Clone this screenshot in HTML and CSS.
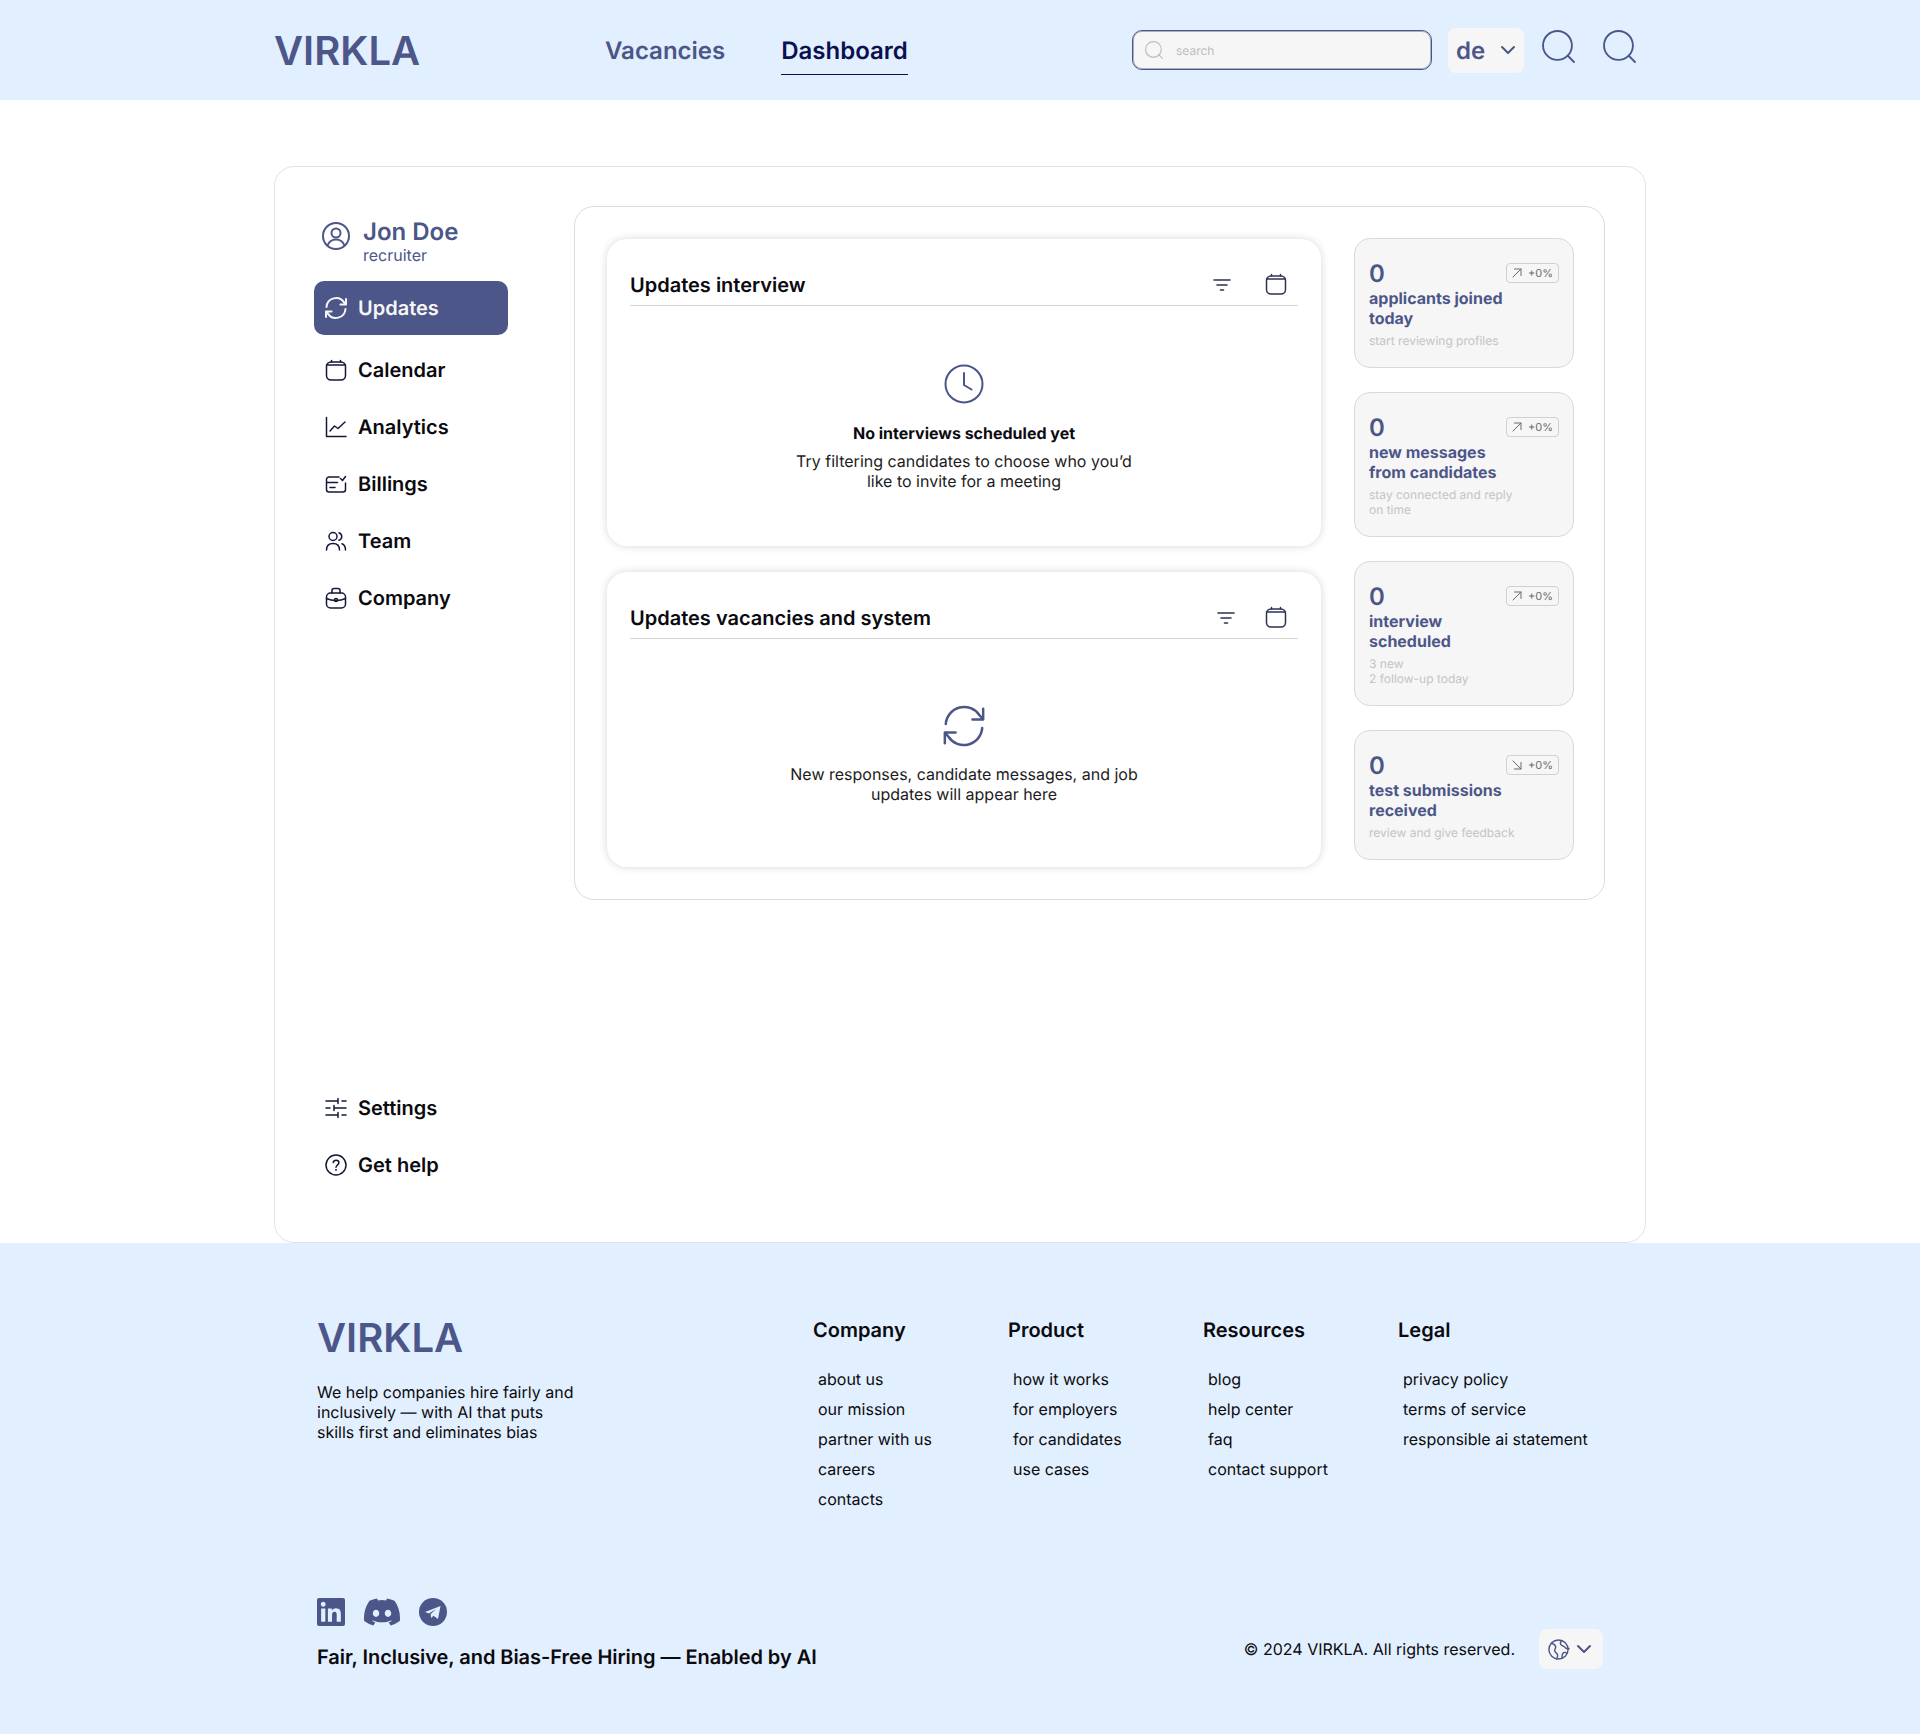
FILE: index.html
```html
<!DOCTYPE html>
<html lang="en">
<head>
    <meta charset="UTF-8">
    <meta name="viewport" content="width=device-width, initial-scale=1.0">
    <title>VIRKLA - Dashboard</title>
    <link rel="stylesheet" href="styles.css">
</head>
<body>
    <svg class="sprites" aria-hidden="true">
        <symbol id="i-search" viewBox="0 0 32 32"><circle cx="15" cy="15" r="14"/><path d="M25 25l6 6"/></symbol>
        <symbol id="i-chevron" viewBox="0 0 24 24"><path d="M6 9l6 6 6-6"/></symbol>
        <symbol id="i-sync" viewBox="0 0 24 24"><path d="M2.500 11a9.600 9.600 0 0 1 17.600-4.600L22 8.600M22 3v5.600h-5.600"/><path d="M21.500 13a9.600 9.600 0 0 1-17.600 4.600L2 15.400M2 21v-5.600h5.600"/></symbol>
        <symbol id="i-calendar" viewBox="0 0 24 24"><rect x="2.500" y="4" width="19" height="18" rx="4.500"/><path d="M2.500 7h19M7.500 2.500V4M16.500 2.500V4"/></symbol>
        <symbol id="i-filter" viewBox="0 0 18 14"><path d="M1 2h16M4 7h10M7.500 12h3"/></symbol>
        <symbol id="i-up" viewBox="0 0 12 12"><path d="M2 10l8-8M3.500 2H10v6.500"/></symbol>
        <symbol id="i-down" viewBox="0 0 12 12"><path d="M2 2l8 8M3.500 10H10V3.500"/></symbol>
    </svg>

    <header class="header">
        <div class="header-inner">
            <a class="logo header-logo">VIRKLA</a>
            <nav class="top-nav">
                <a class="top-link">Vacancies</a>
                <a class="top-link active">Dashboard</a>
            </nav>
            <div class="header-tools">
                <div class="search">
                    <svg class="search-icon"><use href="#i-search"/></svg>
                    <span>search</span>
                </div>
                <div class="lang">
                    <span>de</span>
                    <svg class="lang-chevron"><use href="#i-chevron"/></svg>
                </div>
                <svg class="tool-icon"><use href="#i-search"/></svg>
                <svg class="tool-icon"><use href="#i-search"/></svg>
            </div>
        </div>
    </header>

    <main class="main">
        <div class="board">
            <aside class="sidebar">
                <div class="side-top">
                    <div class="user">
                        <svg class="user-icon" viewBox="0 0 28 28"><circle cx="14" cy="14" r="13"/><circle cx="14" cy="11" r="4.500"/><path d="M5.500 23.500c1.500-4 4.500-6 8.500-6s7 2 8.500 6"/></svg>
                        <div>
                            <div class="user-name">Jon Doe</div>
                            <div class="user-role">recruiter</div>
                        </div>
                    </div>
                    <a class="side-item current"><svg class="side-icon"><use href="#i-sync"/></svg>Updates</a>
                    <a class="side-item"><svg class="side-icon"><use href="#i-calendar"/></svg>Calendar</a>
                    <a class="side-item">
                        <svg class="side-icon" viewBox="0 0 24 24"><path d="M2.500 2.500V21.500H22M6 16l4.500-5 3.500 2.500L21 7"/></svg>
                        Analytics
                    </a>
                    <a class="side-item">
                        <svg class="side-icon" viewBox="0 0 24 24"><path d="M15 5H5a2.500 2.500 0 0 0-2.500 2.500v10A2.500 2.500 0 0 0 5 20h14a2.500 2.500 0 0 0 2.500-2.500V11M2.500 10.500h11M6 15.500h5M16.500 6.500l2 2 3-4"/></svg>
                        Billings
                    </a>
                    <a class="side-item">
                        <svg class="side-icon" viewBox="0 0 24 24"><circle cx="9" cy="7.500" r="4"/><path d="M2.500 21c0-4.500 2.500-6.500 6.500-6.500s6.500 2 6.500 6.500M15 3.700a4 4 0 0 1 0 7.600M18 14.800c2.200.9 3.500 3 3.500 6.200"/></svg>
                        Team
                    </a>
                    <a class="side-item">
                        <svg class="side-icon" viewBox="0 0 24 24"><rect x="2.500" y="7" width="19" height="15" rx="4"/><path d="M8 7V4.500A2 2 0 0 1 10 2.500h4a2 2 0 0 1 2 2V7M2.500 12.500c3 1.500 6 2 9.500 2s6.500-.5 9.500-2"/><circle cx="12" cy="14" r="1.500"/></svg>
                        Company
                    </a>
                </div>
                <div class="side-bottom">
                    <a class="side-item">
                        <svg class="side-icon" viewBox="0 0 24 24"><path d="M2 5h12M18 5h4M14 2.500v5M2 12h4M10 12h12M10 9.500v5M2 19h12M18 19h4M14 16.500v5"/></svg>
                        Settings
                    </a>
                    <a class="side-item">
                        <svg class="side-icon" viewBox="0 0 24 24"><circle cx="12" cy="12" r="10"/><path d="M9.200 9.500A2.900 2.900 0 0 1 12 7.300c1.600 0 2.900 1 2.900 2.500 0 2.200-2.900 2.400-2.900 4.500M12 16.500v.800"/></svg>
                        Get help
                    </a>
                </div>
            </aside>

            <section class="panel">
                <div class="feeds">
                    <article class="feed feed-interview">
                        <div class="feed-head">
                            <h2>Updates interview</h2>
                            <svg class="head-filter"><use href="#i-filter"/></svg>
                            <svg class="head-calendar"><use href="#i-calendar"/></svg>
                        </div>
                        <div class="feed-empty">
                            <svg class="empty-icon" viewBox="0 0 40 40"><circle cx="20" cy="20" r="18.500"/><path d="M20 9v12l7.500 4.500"/></svg>
                            <strong>No interviews scheduled yet</strong>
                            <p>Try filtering candidates to choose who you’d<br>like to invite for a meeting</p>
                        </div>
                    </article>
                    <article class="feed feed-system">
                        <div class="feed-head">
                            <h2>Updates vacancies and system</h2>
                            <svg class="head-filter wide"><use href="#i-filter"/></svg>
                            <svg class="head-calendar"><use href="#i-calendar"/></svg>
                        </div>
                        <div class="feed-empty">
                            <svg class="empty-icon"><use href="#i-sync"/></svg>
                            <p>New responses, candidate messages, and job<br>updates will appear here</p>
                        </div>
                    </article>
                </div>

                <div class="stats">
                    <div class="stat">
                        <div class="stat-top">
                            <span class="stat-num">0</span>
                            <span class="stat-badge"><svg><use href="#i-up"/></svg>+0%</span>
                        </div>
                        <div class="stat-title">applicants joined<br>today</div>
                        <div class="stat-note">start reviewing profiles</div>
                    </div>
                    <div class="stat">
                        <div class="stat-top">
                            <span class="stat-num">0</span>
                            <span class="stat-badge"><svg><use href="#i-up"/></svg>+0%</span>
                        </div>
                        <div class="stat-title">new messages<br>from candidates</div>
                        <div class="stat-note">stay connected and reply<br>on time</div>
                    </div>
                    <div class="stat">
                        <div class="stat-top">
                            <span class="stat-num">0</span>
                            <span class="stat-badge"><svg><use href="#i-up"/></svg>+0%</span>
                        </div>
                        <div class="stat-title">interview<br>scheduled</div>
                        <div class="stat-note">3 new<br>2 follow-up today</div>
                    </div>
                    <div class="stat">
                        <div class="stat-top">
                            <span class="stat-num">0</span>
                            <span class="stat-badge"><svg><use href="#i-down"/></svg>+0%</span>
                        </div>
                        <div class="stat-title">test submissions<br>received</div>
                        <div class="stat-note">review and give feedback</div>
                    </div>
                </div>
            </section>
        </div>
    </main>

    <footer class="footer">
        <div class="footer-inner">
            <div class="footer-top">
                <div class="footer-brand">
                    <div class="logo">VIRKLA</div>
                    <p>We help companies hire fairly and<br>inclusively — with AI that puts<br>skills first and eliminates bias</p>
                </div>
                <div class="footer-col">
                    <h3>Company</h3>
                    <a>about us</a>
                    <a>our mission</a>
                    <a>partner with us</a>
                    <a>careers</a>
                    <a>contacts</a>
                </div>
                <div class="footer-col">
                    <h3>Product</h3>
                    <a>how it works</a>
                    <a>for employers</a>
                    <a>for candidates</a>
                    <a>use cases</a>
                </div>
                <div class="footer-col">
                    <h3>Resources</h3>
                    <a>blog</a>
                    <a>help center</a>
                    <a>faq</a>
                    <a>contact support</a>
                </div>
                <div class="footer-col">
                    <h3>Legal</h3>
                    <a>privacy policy</a>
                    <a>terms of service</a>
                    <a>responsible ai statement</a>
                </div>
            </div>
            <div class="footer-bottom">
                <div>
                    <div class="socials">
                        <svg class="social-linkedin" viewBox="0 0 24 24"><path d="M20.447 20.452h-3.554v-5.569c0-1.328-.027-3.037-1.852-3.037-1.853 0-2.136 1.445-2.136 2.939v5.667H9.351V9h3.414v1.561h.046c.477-.9 1.637-1.85 3.37-1.85 3.601 0 4.267 2.37 4.267 5.455v6.286zM5.337 7.433c-1.144 0-2.063-.926-2.063-2.065 0-1.138.92-2.063 2.063-2.063 1.14 0 2.064.925 2.064 2.063 0 1.139-.925 2.065-2.064 2.065zm1.782 13.019H3.555V9h3.564v11.452zM22.225 0H1.771C.792 0 0 .774 0 1.729v20.542C0 23.227.792 24 1.771 24h20.451C23.200 24 24 23.227 24 22.271V1.729C24 .774 23.200 0 22.222 0h.003z"/></svg>
                        <svg class="social-discord" viewBox="0 2.500 24 19" preserveAspectRatio="none"><path d="M20.317 4.370a19.791 19.791 0 0 0-4.885-1.515.074.074 0 0 0-.079.037c-.210.375-.444.864-.608 1.250a18.270 18.270 0 0 0-5.487 0 12.640 12.640 0 0 0-.617-1.250.077.077 0 0 0-.079-.037A19.736 19.736 0 0 0 3.677 4.370a.070.070 0 0 0-.032.027C.533 9.046-.320 13.580.099 18.057a.082.082 0 0 0 .031.057 19.900 19.900 0 0 0 5.993 3.030.078.078 0 0 0 .084-.028 14.090 14.090 0 0 0 1.226-1.994.076.076 0 0 0-.041-.106 13.107 13.107 0 0 1-1.872-.892.077.077 0 0 1-.008-.128 10.200 10.200 0 0 0 .372-.292.074.074 0 0 1 .077-.010c3.928 1.793 8.180 1.793 12.062 0a.074.074 0 0 1 .078.010c.120.098.246.198.373.292a.077.077 0 0 1-.006.127 12.299 12.299 0 0 1-1.873.892.077.077 0 0 0-.041.107c.360.698.772 1.362 1.225 1.993a.076.076 0 0 0 .084.028 19.839 19.839 0 0 0 6.002-3.030.077.077 0 0 0 .032-.054c.500-5.177-.838-9.674-3.549-13.660a.061.061 0 0 0-.031-.030zM8.020 15.330c-1.183 0-2.157-1.085-2.157-2.419 0-1.333.956-2.419 2.157-2.419 1.210 0 2.176 1.096 2.157 2.420 0 1.333-.956 2.418-2.157 2.418zm7.975 0c-1.183 0-2.157-1.085-2.157-2.419 0-1.333.955-2.419 2.157-2.419 1.210 0 2.176 1.096 2.157 2.420 0 1.333-.946 2.418-2.157 2.418z"/></svg>
                        <svg class="social-telegram" viewBox="0 0 28 28"><circle cx="14" cy="14" r="14"/><path class="plane" d="M6 14l15.500-6-2.500 13-4.500-3.300-2.300 2.300-.6-3.700 5.400-5.300-7 4.400z"/></svg>
                    </div>
                    <div class="tagline">Fair, Inclusive, and Bias-Free Hiring — Enabled by AI</div>
                </div>
                <div class="footer-legal">
                    <span>© 2024 VIRKLA. All rights reserved.</span>
                    <div class="globe-btn">
                        <svg class="globe" viewBox="0 0 24 24"><circle cx="12" cy="12" r="10"/><path d="M4.500 5.500c2 .5 4 1.500 4.500 3.500s-1.500 2.500-1 4.500 2.500 2 3 4-.5 3-1 4.500M15 2.500c-1 1.500-1.500 3-.5 4.500s3 1 4 2.500 3 2 4.500 1.500M21 16c-1.500-1-3.500-1.500-4.500 0s-.5 3-1 5"/></svg>
                        <svg class="globe-chevron"><use href="#i-chevron"/></svg>
                    </div>
                </div>
            </div>
        </div>
    </footer>
</body>
</html>
```

FILE: styles.css
```css
* {
    box-sizing: border-box;
}
body {
    margin: 0;
    font-family: Inter, "Liberation Sans", sans-serif;
    color: #0b0b0f;
    background: white;
    text-rendering: geometricPrecision;
}
h2, h3, p {
    margin: 0;
}
svg {
    display: block;
    flex: none;
    fill: none;
    stroke: currentColor;
    stroke-width: 1.5;
    stroke-linecap: round;
    stroke-linejoin: round;
}
.sprites {
    display: none;
}
.logo {
    font-size: 40px;
    line-height: 48px;
    font-weight: 600;
    color: #4c5688;
}

/* header */
.header {
    height: 100px;
    background: #e2effe;
}
.header-inner {
    width: 1372px;
    height: 100%;
    margin: 0 auto;
    padding-right: 10px;
    display: flex;
    align-items: center;
}
.header-logo {
    width: 331px;
    padding-top: 2px;
    height: 50px;
}
.top-nav {
    display: flex;
    gap: 56px;
}
.top-link {
    font-size: 24px;
    line-height: 29px;
    font-weight: 600;
    color: #4c5688;
    padding: 7px 0 9px;
    border-bottom: 1px solid transparent;
    margin-top: 3px;
}
.top-link.active {
    color: #0a1050;
    border-bottom-color: #0a1050;
}
.header-tools {
    margin-left: auto;
    display: flex;
    align-items: center;
    color: #4c5688;
}
.search {
    width: 300px;
    height: 40px;
    padding-left: 12px;
    display: flex;
    align-items: center;
    gap: 13px;
    background: #f6f6f6;
    border: 1px solid #4c5688;
    box-shadow: inset 0 0 0 1px rgba(76,86,136,0.45);
    border-radius: 10px;
    font-size: 12px;
    color: #bdbdbd;
}
.search-icon {
    width: 18px;
    height: 18px;
    stroke-width: 2;
}
.lang {
    width: 76px;
    height: 45px;
    margin: 0 18px 0 16px;
    padding: 0 4px 0 8px;
    display: flex;
    align-items: center;
    justify-content: space-between;
    background: #f6f6f6;
    border-radius: 8px;
    font-size: 24px;
    font-weight: 600;
}
.lang-chevron {
    width: 24px;
    height: 24px;
    stroke-width: 2;
}
.tool-icon {
    width: 33px;
    height: 33px;
    margin-top: -8px;
    stroke-width: 1.8;
}
.tool-icon + .tool-icon {
    margin-left: 28px;
}

/* main */
.main {
    padding-top: 66px;
}
.board {
    width: 1372px;
    height: 1077px;
    margin: 0 auto;
    padding: 39px 41px 0 0;
    display: flex;
    align-items: flex-start;
    border: 1px solid #e2e2e2;
    border-radius: 20px;
}
.sidebar {
    width: 299px;
    height: 982px;
    padding: 11px 0 0 39px;
    display: flex;
    flex-direction: column;
    justify-content: space-between;
    flex: none;
}
.side-top, .side-bottom {
    display: flex;
    flex-direction: column;
    gap: 11px;
    width: 194px;
}
.user {
    display: flex;
    align-items: flex-start;
    gap: 13px;
    padding-left: 8px;
    margin-bottom: 5px;
    color: #4c5688;
}
.user-icon {
    width: 28px;
    height: 28px;
    margin-top: 5px;
    stroke-width: 2;
}
.user-name {
    font-size: 24px;
    line-height: 29px;
    font-weight: 600;
}
.user-role {
    font-size: 16px;
    line-height: 19px;
}
.side-item {
    height: 46px;
    padding-left: 10px;
    display: flex;
    align-items: center;
    gap: 10px;
    font-size: 20px;
    font-weight: 600;
}
.side-item.current {
    height: 54px;
    margin-bottom: 1px;
    background: #4c5688;
    border-radius: 10px;
    color: #f6f6f6;
}
.side-icon {
    width: 24px;
    height: 24px;
    color: #14183a;
}
.current .side-icon {
    color: #f6f6f6;
    stroke-width: 2;
}

/* panel */
.panel {
    width: 1031px;
    height: 694px;
    padding: 32px 30px 32px 32px;
    display: flex;
    gap: 33px;
    border: 1px solid #dcdcdc;
    border-radius: 20px;
}
.feeds {
    width: 714px;
    flex: none;
    display: flex;
    flex-direction: column;
    gap: 26px;
}
.feed {
    background: white;
    padding: 0 23px;
    border-radius: 20px;
    box-shadow: 0 0 8px rgba(0,0,0,0.16);
}
.feed-interview {
    height: 307px;
}
.feed-system {
    height: 295px;
}
.feed-head {
    height: 67px;
    padding-top: 25px;
    display: flex;
    align-items: center;
    border-bottom: 1px solid #d4d4d4;
    color: #2d3250;
}
.feed-head h2 {
    font-size: 20px;
    line-height: 24px;
    font-weight: 600;
    color: #0b0b0f;
    margin-right: auto;
}
.head-filter {
    width: 18px;
    height: 14px;
    margin-right: 33px;
    stroke-width: 1.6;
}
.head-filter.wide {
    margin-right: 29px;
}
.head-calendar {
    width: 24px;
    height: 24px;
    margin: -2px 10px 0 0;
}
.feed-empty {
    display: flex;
    flex-direction: column;
    align-items: center;
    text-align: center;
    font-size: 16px;
    line-height: 20px;
}
.feed-empty p {
    color: #1c1c22;
}
.empty-icon {
    width: 40px;
    height: 40px;
    color: #4c5688;
}
.feed-interview .empty-icon {
    margin: 58px 0 19px;
    stroke-width: 2;
}
.feed-interview strong {
    font-weight: 700;
    margin-bottom: 8px;
}
.feed-system .empty-icon {
    width: 46px;
    height: 46px;
    margin: 64px 0 15px;
    stroke-width: 1.3;
}
.stats {
    width: 220px;
    flex: none;
    display: flex;
    flex-direction: column;
    gap: 24px;
    margin-top: -1px;
}
.stat {
    padding: 20px 14px 19px;
    background: #f6f6f6;
    border: 1px solid #d9d9d9;
    border-radius: 16px;
}
.stat-top {
    display: flex;
    justify-content: space-between;
    align-items: center;
    height: 29px;
}
.stat-num {
    font-size: 24px;
    font-weight: 600;
    color: #4c5688;
}
.stat-badge {
    width: 53px;
    height: 20px;
    padding: 0 5px 0 4px;
    margin-top: -1px;
    display: flex;
    align-items: center;
    justify-content: space-between;
    border: 1px solid #d0d0d0;
    border-radius: 4px;
    font-size: 11px;
    color: #6a6a6a;
}
.stat-badge svg {
    width: 12px;
    height: 12px;
    stroke-width: 1;
}
.stat-title {
    font-size: 16px;
    line-height: 20px;
    font-weight: 700;
    color: #4c5688;
}
.stat-note {
    margin-top: 5px;
    font-size: 12px;
    line-height: 15px;
    color: #c4c4c4;
}

/* footer */
.footer {
    height: 491px;
    background: #e2effe;
}
.footer-inner {
    width: 1372px;
    height: 100%;
    margin: 0 auto;
    padding: 71px 43px 65px;
    display: flex;
    flex-direction: column;
    justify-content: space-between;
}
.footer-top {
    display: flex;
}
.footer-brand {
    width: 496px;
    font-size: 16px;
    line-height: 20px;
}
.footer-brand p {
    margin-top: 20px;
}
.footer-col {
    width: 195px;
    padding-top: 4px;
    display: flex;
    flex-direction: column;
    font-size: 16px;
    line-height: 30px;
}
.footer-col:last-child {
    width: auto;
}
.footer-col h3 {
    font-size: 20px;
    line-height: 24px;
    font-weight: 600;
    margin-bottom: 22px;
}
.footer-col a {
    padding-left: 5px;
}
.footer-bottom {
    display: flex;
    justify-content: space-between;
    align-items: flex-end;
}
.socials {
    display: flex;
    align-items: center;
    margin-bottom: 19px;
}
.socials svg {
    fill: #4c5688;
    stroke: none;
    height: 28px;
}
.social-linkedin {
    width: 28px;
}
.social-discord {
    width: 36px;
    margin: 0 19px;
}
.social-telegram {
    width: 28px;
}
.socials .plane {
    fill: #e2effe;
}
.tagline {
    font-size: 20px;
    line-height: 24px;
    font-weight: 600;
    letter-spacing: -0.05px;
}
.footer-legal {
    display: flex;
    align-items: center;
    gap: 24px;
    font-size: 16px;
}
.globe-btn {
    width: 64px;
    height: 40px;
    display: flex;
    align-items: center;
    justify-content: center;
    gap: 2px;
    background: #f6f6f6;
    border-radius: 8px;
    color: #4c5688;
}
.globe {
    width: 23px;
    height: 23px;
}
.globe-chevron {
    width: 24px;
    height: 24px;
    stroke-width: 2;
}
```
